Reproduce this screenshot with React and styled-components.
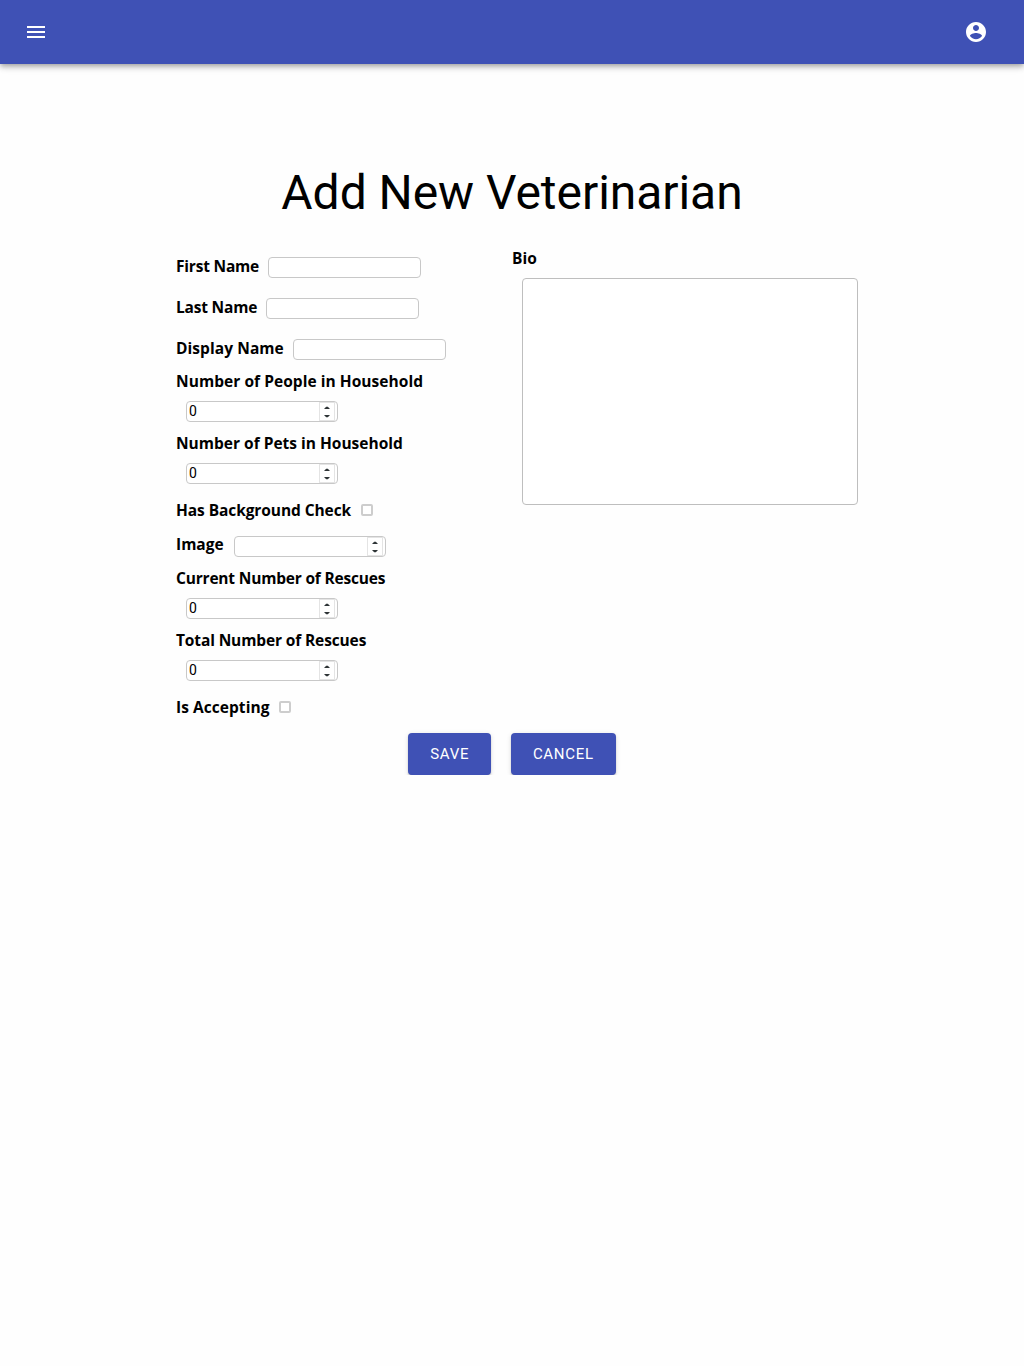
import React from "react";
import styled, { createGlobalStyle } from "styled-components";

const GlobalStyle = createGlobalStyle`
  *, *::before, *::after { box-sizing: border-box; }
  body { margin: 0; background: #fefefe; color: #000; font-family: Roboto, sans-serif; }
`;

const AppBar = styled.header`
  position: relative;
  display: flex;
  align-items: center;
  justify-content: space-between;
  height: 64px;
  padding: 0 36px 0 24px;
  background: #3f51b5;
  box-shadow: 0 2px 4px -1px rgba(0, 0, 0, 0.2), 0 4px 5px 0 rgba(0, 0, 0, 0.14),
    0 1px 10px 0 rgba(0, 0, 0, 0.12);
`;

const IconButton = styled.button`
  display: flex;
  padding: 0;
  border: 0;
  background: none;
  color: #fff;
  svg { width: 24px; height: 24px; fill: currentColor; }
`;

const Main = styled.main`
  width: 672px;
  margin: 0 auto;
  padding-top: 101px;
`;

const Title = styled.h1`
  margin: 0;
  height: 82px;
  font: 400 48px/56px Roboto, sans-serif;
  letter-spacing: -0.05px;
  text-align: center;
  white-space: nowrap;
`;

const Columns = styled.div`
  display: grid;
  grid-template-columns: 336px 336px;
`;

const Column = styled.div`
  display: flex;
  flex-direction: column;
`;

const InlineField = styled.label`
  display: flex;
  align-items: flex-start;
  height: ${(p) => (p.$check ? 32 : 41)}px;
  padding-top: ${(p) => p.$top ?? 9}px;
`;

const StackedField = styled.label`
  display: flex;
  flex-direction: column;
  align-items: flex-start;
`;

const LabelText = styled.span`
  flex: none;
  height: 21px;
  width: ${(p) => (p.$width ? `${p.$width}px` : "auto")};
  font: 700 15.5px/21px "Open Sans", "Noto Sans", sans-serif;
  letter-spacing: ${(p) => p.$spacing ?? 0}px;
  white-space: nowrap;
`;

const StackedText = styled(LabelText)`
  padding-top: 1px;
`;

const Control = styled.span`
  display: flex;
  flex: none;
  width: ${(p) => p.$width ?? 152}px;
  height: 21px;
  margin: ${(p) => p.$margin ?? "10px"};
  border: 1px solid #c8c8c8;
  border-radius: 4px;
  background: #fff;
`;

const Input = styled.input`
  flex: 1;
  min-width: 0;
  height: 19px;
  padding: 0 2px;
  border: 0;
  outline: 0;
  background: transparent;
  font: 400 14px/19px Roboto, sans-serif;
`;

const Spinner = styled.span`
  display: flex;
  width: 16px;
  height: 19px;
  margin-right: 2px;
  border: 1px solid #e4e4e4;
  svg { width: 14px; height: 17px; fill: #2e3436; }
`;

const Checkbox = styled.input`
  appearance: none;
  width: 12px;
  height: 12px;
  margin: 4px 0 0 10px;
  border: 2px solid #cdcdcd;
  border-radius: 2px;
  background: #fff;
`;

const TextArea = styled.textarea`
  display: block;
  width: 336px;
  height: 227px;
  margin: 10px;
  padding: 2px;
  border: 1px solid #bebebe;
  border-radius: 4px;
  background: #fff;
  resize: none;
  outline: 0;
`;

const Actions = styled.div`
  display: flex;
  justify-content: center;
  gap: 20px;
  padding-top: 10px;
`;

const Button = styled.button`
  width: ${(p) => p.$width}px;
  height: 42px;
  padding: 0;
  border: 0;
  border-radius: 4px;
  background: #3f51b5;
  color: #fff;
  font: 400 15px/26px Roboto, sans-serif;
  letter-spacing: 0.69px;
  box-shadow: 0 3px 1px -2px rgba(0, 0, 0, 0.2), 0 2px 2px 0 rgba(0, 0, 0, 0.14),
    0 1px 5px 0 rgba(0, 0, 0, 0.12);
`;

function TextField({ label, width, spacing }) {
  return (
    <InlineField>
      <LabelText $width={width} $spacing={spacing}>{label}</LabelText>
      <Control $width={153} $margin="1px 10px 0">
        <Input type="text" />
      </Control>
    </InlineField>
  );
}

function NumberControl({ value, margin }) {
  return (
    <Control $margin={margin}>
      <Input type="text" inputMode="numeric" defaultValue={value} />
      <Spinner>
        <svg viewBox="0 0 14 17">
          <path d="M4 6h6L7.8 3.8H6.2zM4 12h6l-2.2 2.2H6.2z" />
        </svg>
      </Spinner>
    </Control>
  );
}

function NumberField({ label, value, spacing }) {
  return (
    <StackedField>
      <StackedText $spacing={spacing}>{label}</StackedText>
      <NumberControl value={value} />
    </StackedField>
  );
}

function CheckField({ label, width, spacing }) {
  return (
    <InlineField $check $top={6}>
      <LabelText $width={width} $spacing={spacing}>{label}</LabelText>
      <Checkbox type="checkbox" />
    </InlineField>
  );
}

export default function App() {
  return (
    <>
      <GlobalStyle />
      <AppBar>
        <IconButton aria-label="menu">
          <svg viewBox="0 0 24 24">
            <path d="M3 18h18v-2H3v2zm0-5h18v-2H3v2zm0-7v2h18V6H3z" />
          </svg>
        </IconButton>
        <IconButton aria-label="account">
          <svg viewBox="0 0 24 24">
            <path d="M12 2C6.48 2 2 6.48 2 12s4.48 10 10 10 10-4.48 10-10S17.52 2 12 2zm0 3c1.66 0 3 1.34 3 3s-1.34 3-3 3-3-1.34-3-3 1.34-3 3-3zm0 14.2c-2.5 0-4.71-1.28-6-3.22.03-1.99 4-3.08 6-3.08 1.99 0 5.97 1.09 6 3.08-1.29 1.94-3.5 3.22-6 3.22z" />
          </svg>
        </IconButton>
      </AppBar>
      <Main>
        <Title>Add New Veterinarian</Title>
        <Columns>
          <Column>
            <TextField label="First Name" width={82.4} spacing={-0.2} />
            <TextField label="Last Name" width={80.4} spacing={-0.2} />
            <TextField label="Display Name" width={107.4} spacing={0.07} />
            <NumberField label="Number of People in Household" value="0" spacing={0.05} />
            <NumberField label="Number of Pets in Household" value="0" />
            <CheckField label="Has Background Check" width={175} spacing={-0.08} />
            <InlineField $top={8}>
              <LabelText $width={48}>Image</LabelText>
              <NumberControl value="" margin="2px 10px 0" />
            </InlineField>
            <NumberField label="Current Number of Rescues" value="0" spacing={-0.19} />
            <NumberField label="Total Number of Rescues" value="0" spacing={-0.13} />
            <CheckField label="Is Accepting" width={93} spacing={0.05} />
          </Column>
          <Column>
            <StackedField>
              <StackedText>Bio</StackedText>
              <TextArea />
            </StackedField>
          </Column>
        </Columns>
        <Actions>
          <Button $width={82.6}>SAVE</Button>
          <Button $width={104.6}>CANCEL</Button>
        </Actions>
      </Main>
    </>
  );
}
